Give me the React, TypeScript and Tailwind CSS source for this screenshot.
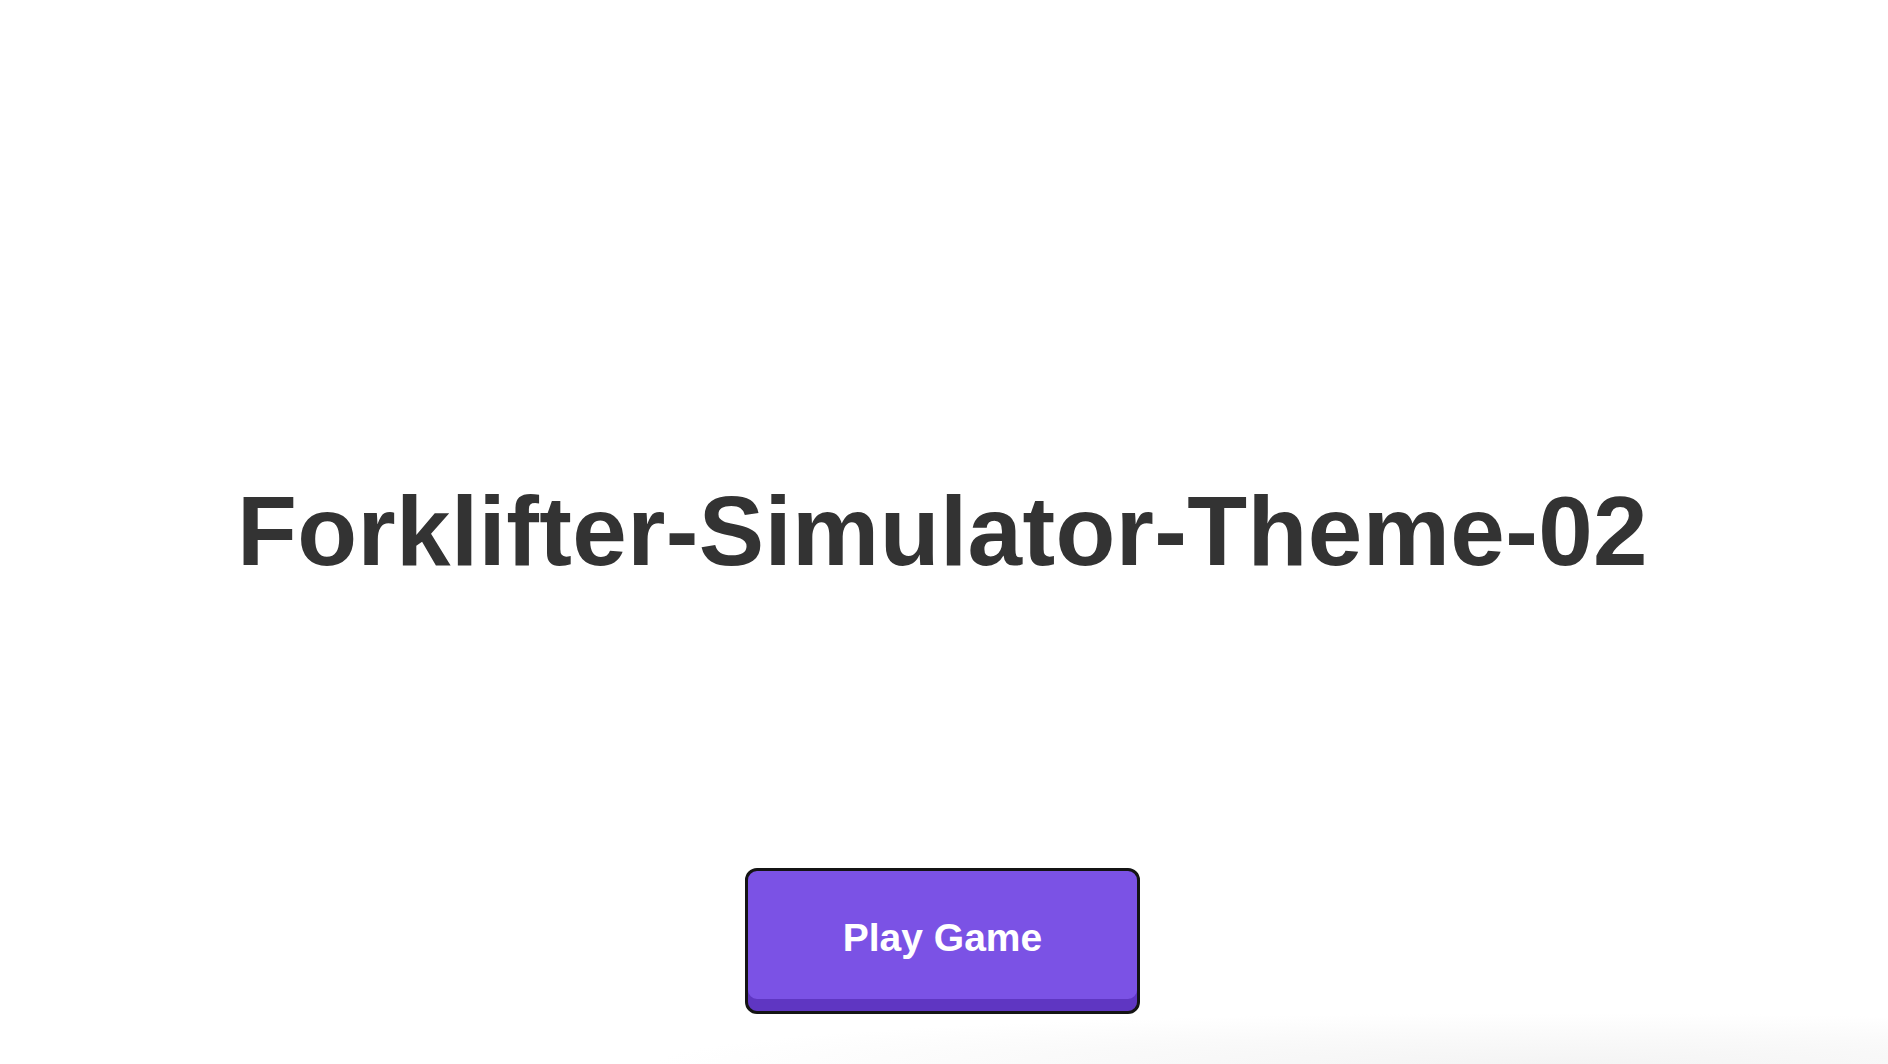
export default function App() {
  return (
    <div className="relative min-h-screen h-[1064px] overflow-hidden bg-white font-['Liberation_Sans',Arial,sans-serif]">
      <div className="pointer-events-none absolute bottom-0 left-[560px] right-0 h-[60px] bg-[radial-gradient(ellipse_80%_100%_at_75%_100%,#f4f4f4_0%,#fafafa_50%,rgba(255,255,255,0)_85%)]" />
      <div className="relative flex flex-col items-center pt-[482px]">
        <h1 className="mr-[3px] text-[98px] leading-[99px] font-bold tracking-[0.4px] text-[#333333]">
          Forklifter-Simulator-Theme-02
        </h1>
        <button className="mt-[287px] mr-[3px] flex h-[146px] w-[395px] items-center justify-center rounded-[12px] border-[3px] border-[#141414] bg-[#7b52e5] pb-[6px] text-[39px] font-bold text-white shadow-[inset_0_-12px_0_#5f36c2]">
          Play Game
        </button>
      </div>
    </div>
  );
}
